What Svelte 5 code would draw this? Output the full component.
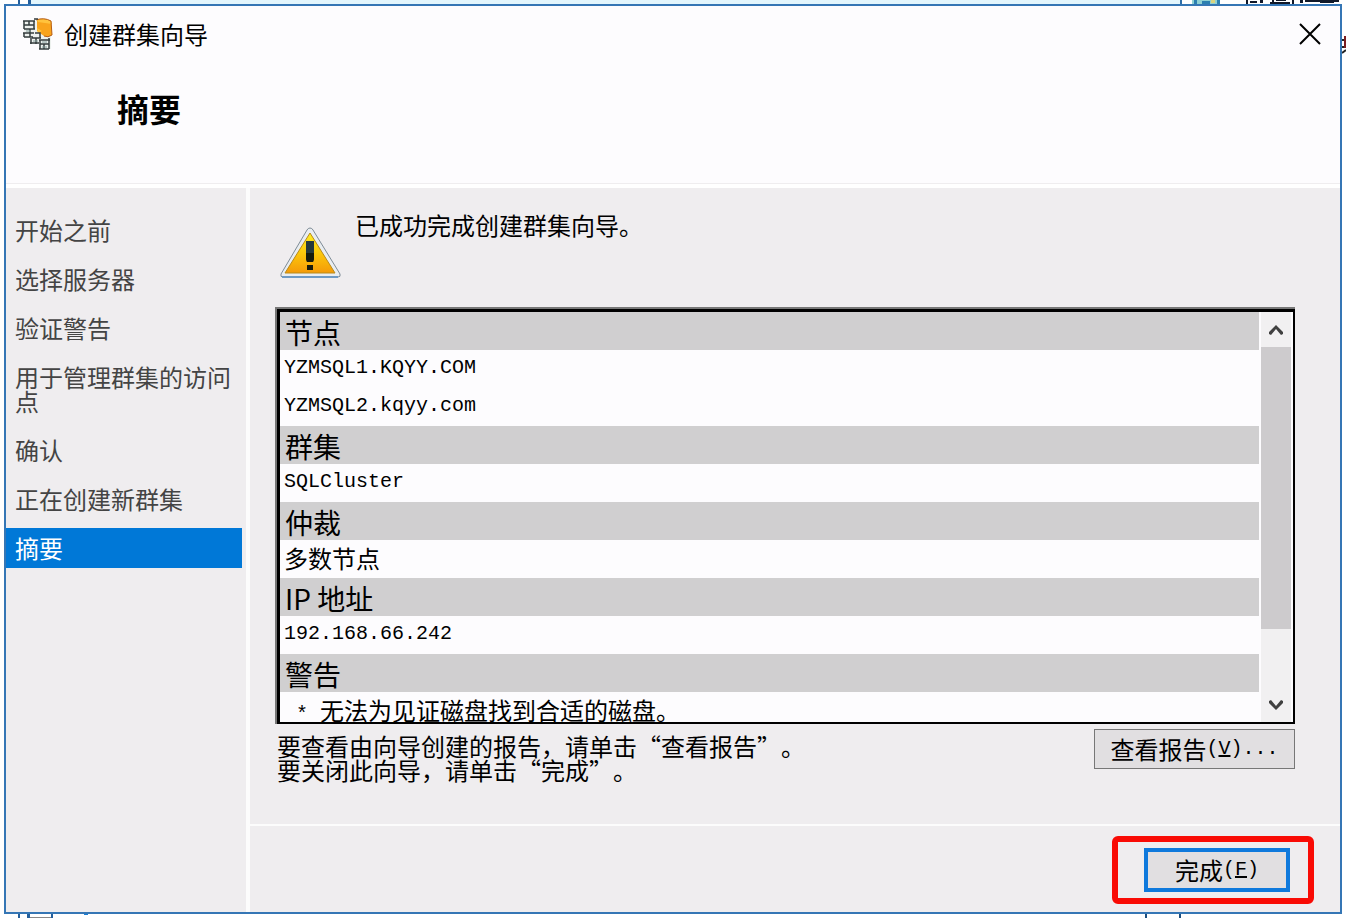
<script lang="ts">
  type Section = { title: string; lines: { text: string; latin?: boolean }[] };

  const steps = ['开始之前', '选择服务器', '验证警告', '用于管理群集的访问点', '确认', '正在创建新群集', '摘要'];
  const current = 6;

  const sections: Section[] = [
    { title: '节点', lines: [{ text: 'YZMSQL1.KQYY.COM', latin: true }, { text: 'YZMSQL2.kqyy.com', latin: true }] },
    { title: '群集', lines: [{ text: 'SQLCluster', latin: true }] },
    { title: '仲裁', lines: [{ text: '多数节点' }] },
    { title: 'IP 地址', lines: [{ text: '192.168.66.242', latin: true }] },
  ];
</script>

<div class="desktop">
  <!-- slivers of the windows behind the dialog -->
  <div class="behind strip"></div>
  <svg class="behind top-right" width="168" height="6" viewBox="0 0 168 6" aria-hidden="true">
    <path d="M2 0h2v6H2z" fill="#2f6fa8" />
    <path d="M14 0h28v4H14z" fill="#8fd0d2" />
    <path d="M16 0h3v4h-3zM24 1h8v3h-8zM39 0h3v4h-3z" fill="#2b7fb0" />
    <path d="M33 0h4v3h-4z" fill="#d9d480" />
    <path d="M68 0h2v4h-2zM72 1h7v2h-7zM82 0h3v3h-3zM92 2h20v2H92zM94 0h2v4h-2zM114 0h2v4h-2zM98 0h10v1H98zM122 0h3v3h-3zM127 0h34v2h-34zM142 2h14v1h-14z" fill="#101828" />
  </svg>
  <svg class="behind right" width="5" height="20" viewBox="0 0 5 20" aria-hidden="true">
    <path d="M0 5h5M0 12h5M1 18l4-3" stroke="#222" stroke-width="2" />
    <path d="M3 1h2v12H3z" fill="#7b1d20" />
  </svg>
  <svg class="behind bottom-left" width="72" height="4" viewBox="0 0 72 4" aria-hidden="true">
    <path d="M0 0h2v4H0zM9 0h3v4H9zM33 0h2v4h-2z" fill="#245f9c" />
    <path d="M12 3h21v1H12z" fill="#888" />
    <path d="M66 0h4v1h-4z" fill="#1a7fd6" />
  </svg>
  <svg class="behind bottom-right" width="37" height="4" viewBox="0 0 37 4" aria-hidden="true">
    <path d="M0 0h2v4H0zM34 0h2v4h-2z" fill="#1d4f80" />
  </svg>

  <main class="dialog">
    <header>
      <div class="titlebar">
        <svg class="app-icon" width="32" height="32" viewBox="0 0 32 32" aria-hidden="true">
          <path d="M1 3h17v17H3zM9 16h20v15H17v-5H8z" fill="#edf1ee" />
          <path d="M15 2q6-3 14 1l1 14q-4 3-8 1l-7-5z" fill="#f9a41c" />
          <path d="M15 2q7-2 14 1l1 3-14-2zM15 10l5 3-4 2z" fill="#ffc33d" />
          <path d="M14 2q8-3 15 1l1 14q-4 3-8 1" fill="none" stroke="#b65d14" />
          <path d="M1 3h12M2 7h10M2 11h11M1 15h11M2 19h9M2 3v8M12 3v8M7 3v4M8 11v8M2 15v4M10 20h9M8 25h9M9 20v6M14 20v6M17 22h11M18 26h9M17 31h10M18 22v9M27 20v11M22 26v5M13 15h5v5M12 1h4" fill="none" stroke="#353d3e" stroke-width="1.5" />
          <path d="M4 13h5M11 23h5M20 24h5M20 29h5" stroke="#829c9a" />
        </svg>
        <span>创建群集向导</span>
        <button class="close" aria-label="关闭">
          <svg width="22" height="22" viewBox="0 0 22 22"><path d="M1 1l20 20M21 1L1 21" stroke="#000" stroke-width="2" /></svg>
        </button>
      </div>
      <h1>摘要</h1>
    </header>

    <div class="body">
      <nav>
        <ol>
          {#each steps as step, i}
            <li class:active={i === current} aria-current={i === current ? 'step' : undefined}>{step}</li>
          {/each}
        </ol>
      </nav>

      <div class="page">
        <section class="content">
          <div class="result">
            <svg width="62" height="52" viewBox="0 0 62 52" aria-hidden="true">
              <defs>
                <linearGradient id="warn" x1="0" y1="0" x2="0" y2="1">
                  <stop offset="0" stop-color="#ffee22" />
                  <stop offset="0.5" stop-color="#fcc80b" />
                  <stop offset="1" stop-color="#f49a08" />
                </linearGradient>
              </defs>
              <path d="M31 1q2 0 3 2l27 44q1 3-2 3H4q-3 0-2-3L28 3q1-2 3-2z" fill="#e9edf0" stroke="#7e8b96" />
              <path d="M3 50h56" stroke="#6e9ac4" stroke-width="2" />
              <path d="M31 6l25 40H6z" fill="url(#warn)" stroke="#b98a19" />
              <path d="M27 14h8v18l-1 3h-6l-1-3z" fill="#25393d" />
              <path d="M27 26h8v6l-1 3h-6l-1-3zM28 38h6v5h-6z" fill="#171b0c" />
            </svg>
            <p>已成功完成创建群集向导。</p>
          </div>

          <div class="report">
            <div class="rows">
              {#each sections as section}
                <h2>{section.title}</h2>
                {#each section.lines as line}
                  <p class:latin={line.latin}>{line.text}</p>
                {/each}
              {/each}
              <h2>警告</h2>
              <ul><li>无法为见证磁盘找到合适的磁盘。</li></ul>
            </div>
            <div class="scrollbar">
              <button aria-label="向上滚动">
                <svg width="16" height="12" viewBox="0 0 16 12"><path d="M1 10V8l7-7 7 7v2l-2 1-5-6-5 6z" fill="#404040" /></svg>
              </button>
              <div class="track"><div class="thumb"></div></div>
              <button aria-label="向下滚动">
                <svg width="16" height="12" viewBox="0 0 16 12"><path d="M1 2v2l7 7 7-7V2l-2-1-5 6-5-6z" fill="#404040" /></svg>
              </button>
            </div>
          </div>

          <div class="hint">
            <p>要查看由向导创建的报告，请单击“查看报告”。<br />要关闭此向导，请单击“完成”。</p>
            <button class="view">查看报告<span class="latin">(<u>V</u>)...</span></button>
          </div>
        </section>

        <footer>
          <div class="highlight">
            <button class="finish">完成<span class="latin">(<u>F</u>)</span></button>
          </div>
        </footer>
      </div>
    </div>
  </main>
</div>

<style>
  :global(body) { margin: 0; background: #fff; }
  .desktop { position: relative; box-sizing: border-box; min-height: 100vh; padding: 4px; display: flex; color: #000; font-family: "Noto Sans CJK SC", "Liberation Sans", sans-serif; font-size: 24px; line-height: 24px; font-kerning: none; text-spacing-trim: space-all; overflow: hidden; }
  .behind { position: absolute; }
  .strip { left: 18px; right: 166px; top: 0; height: 4px; box-sizing: border-box; border-left: 2px solid #245f9c; background: linear-gradient(to right, #fff 8px, #245f9c 8px 11px, #e3f6fd 11px); }
  .top-right { right: 0; top: 0; }
  .right { right: 0; top: 35px; }
  .bottom-left { left: 18px; bottom: 0; }
  .bottom-right { right: 164px; bottom: 0; }
  h1, h2, p, ul, ol { margin: 0; padding: 0; font-weight: 400; list-style: none; }
  button { font: inherit; color: inherit; padding: 0; border: 0; background: none; display: flex; align-items: center; justify-content: center; }
  .latin { font-family: "Liberation Mono", monospace; font-size: 20px; }

  .dialog { position: relative; flex: 1; display: flex; flex-direction: column; border: 2px solid #3576b5; background: #efedef; }
  header { box-sizing: border-box; height: 182px; background: linear-gradient(#fdfcfe 177px, #efedef 177px 178px, #fff 178px); }
  .titlebar { display: flex; align-items: center; gap: 10px; height: 56px; padding: 0 18px 0 16px; }
  .close { margin-left: auto; width: 24px; height: 24px; }
  h1 { padding: 26px 0 0 111px; font-size: 32px; line-height: 40px; font-weight: 700; }

  .body { flex: 1; display: flex; }
  nav { box-sizing: border-box; width: 244px; padding-top: 22px; border-right: 4px solid #fcfcfc; color: #444; font-weight: 300; }
  nav li { padding: 8px 9px; margin-bottom: 9px; }
  nav li.active { margin-right: 4px; background: #0078d7; color: #fff; font-weight: 400; }

  .page { flex: 1; display: flex; flex-direction: column; }
  .content { flex: 1; padding: 25px 45px 0 25px; }
  .result { display: flex; gap: 14px; height: 94px; padding-left: 4px; }
  .result svg { margin-top: 14px; }
  .report { display: flex; height: 410px; padding: 3px 2px 2px 3px; border: solid #777; border-width: 2px 0 0 2px; background: #000; }
  .rows { flex: 1; overflow: hidden; background: #fdfcfe; }
  .rows h2 { height: 38px; padding-left: 5px; background: #d0cfd0; font-size: 28px; line-height: 40px; }
  .rows p { height: 38px; padding-left: 4px; line-height: 36px; }
  .rows li { padding-left: 16px; line-height: 36px; white-space: nowrap; }
  .rows li::before { content: "*"; font-family: "Liberation Mono", monospace; font-size: 20px; margin-right: 12px; }
  .scrollbar { display: flex; flex-direction: column; box-sizing: border-box; width: 34px; border: solid #fdfcfe; border-width: 0 2px; background: #f1f0f1; }
  .scrollbar button { height: 35px; }
  .track { flex: 1; }
  .thumb { height: 83%; background: #cdcbcd; }
  .hint { display: flex; justify-content: space-between; align-items: flex-start; padding-top: 5px; }
  .hint p { padding: 5px 0 0 2px; }
  .view { box-sizing: border-box; width: 201px; height: 40px; border: 1px solid #777; background: #e1dfe1; }
  footer { display: flex; justify-content: flex-end; padding: 10px 26px 8px; border-top: 2px solid #fcfcfc; }
  .highlight { box-sizing: border-box; width: 202px; height: 68px; padding: 6px 18px 6px 26px; border: 6px solid #f90b05; border-radius: 6px; }
  .finish { box-sizing: border-box; width: 146px; height: 44px; border: 4px solid #0f79dc; background: #e1dfe1; }
</style>
